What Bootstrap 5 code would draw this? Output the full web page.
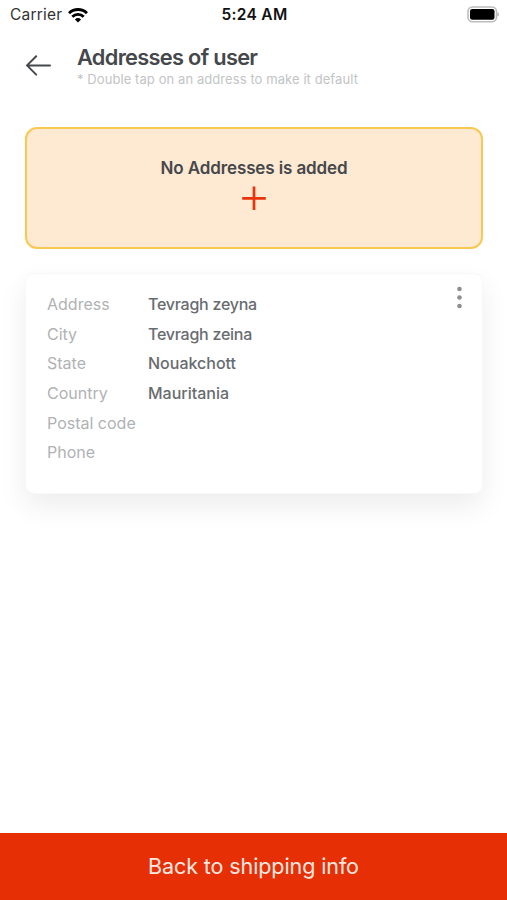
<!DOCTYPE html>
<html lang="en">
<head>
<meta charset="utf-8">
<meta name="viewport" content="width=device-width, initial-scale=1">
<title>Addresses of user</title>
<link href="https://cdn.jsdelivr.net/npm/bootstrap@5.3.0/dist/css/bootstrap.min.css" rel="stylesheet">
<style>
body { font-family: Inter, "Liberation Sans", sans-serif; color: #45484b; background: #fff; }
.screen { height: 900px; overflow: hidden; }
.status-bar { height: 30px; padding: 0 8px 0 10px; font-size: 16px; line-height: 30px; color: #111; }
.status-bar > div { flex: 1 1 0; }
.carrier { color: #333; font-size: 15.5px; letter-spacing: .2px; }
.wifi { margin-left: 6px; }
.clock { font-weight: 600; font-size: 15.5px; letter-spacing: .3px; }
.top-bar { height: 97px; padding: 14px 25px 0; }
.back-btn { width: 52px; padding: 9px 0 0; line-height: 0; border: 0; }
.page-title { font-size: 21.8px; font-weight: 600; line-height: 27px; letter-spacing: -.7px; }
.hint { font-size: 13px; line-height: 16px; color: #c2c4c6; letter-spacing: .08px; }
.content { padding: 0 24px 0 25px; }
.add-box { height: 122px; border: 2px solid #f8c951; border-radius: 12px; background: #fee9d2; padding-top: 26px; }
.add-label { font-size: 17px; font-weight: 600; line-height: 26px; letter-spacing: -.12px; }
.address-card { height: 221px; margin-top: 24px; border: 1px solid #f8f8f8; border-radius: 9px; box-shadow: 0 12px 28px rgba(0,0,0,.075); padding: 15px 20px 15px 21px; }
.field { height: 29.7px; line-height: 30px; }
.field dt { width: 101px; font-size: 16px; font-weight: 400; color: #b0b2b4; letter-spacing: 0; }
.field dd { font-size: 16px; font-weight: 500; color: #686c6f; letter-spacing: -.25px; }
.field .wide { letter-spacing: 0; }
.menu-btn { border: 0; line-height: 0; margin-top: -3px; }
.footer-btn { height: 67px; border-radius: 0; border: 0; background: #e72f06; color: #ffe9e2; font-size: 21.5px; letter-spacing: -.1px; }
.footer-btn:hover { background: #d42b05; color: #fff; }
</style>
</head>
<body>
<div class="screen d-flex flex-column">
  <div class="status-bar d-flex align-items-center">
    <div class="carrier d-flex align-items-center"><span>Carrier</span>
      <svg class="wifi" width="20" height="15" viewBox="0 0 20 15" fill="none" stroke="#000" stroke-width="2.9"><path d="M1 5.3a12.7 12.7 0 0 1 18 0M4.3 8.8a8 8 0 0 1 11.4 0"/><path d="M10 14.5l-3.1-3.1a4.4 4.4 0 0 1 6.2 0z" fill="#000" stroke="none"/></svg>
    </div>
    <div class="clock text-center">5:24 AM</div>
    <div class="d-flex justify-content-end">
      <svg width="32" height="18" viewBox="0 0 32 18"><rect x="1" y="1" width="28.5" height="14.8" rx="4.5" fill="#fff" stroke="#bcbcbc" stroke-width="1.6"/><rect x="3" y="3" width="24.5" height="10.8" rx="2.2"/><path d="M30.5 6.3v4.3q1.4-.6 1.4-2.15t-1.4-2.15" fill="#aaa"/></svg>
    </div>
  </div>
  <header class="top-bar d-flex align-items-start">
    <button class="back-btn btn text-start" aria-label="Back">
      <svg width="27" height="24" viewBox="0 0 27 24" fill="none" stroke="#46494c" stroke-width="2" stroke-linecap="round" stroke-linejoin="round"><path d="M25 12.4H2M11.2 3.2L2 12.4l9.2 9.2"/></svg>
    </button>
    <div>
      <h1 class="page-title mb-0">Addresses of user</h1>
      <p class="hint mb-0">* Double tap on an address to make it default</p>
    </div>
  </header>
  <main class="content flex-grow-1">
    <div class="add-box text-center">
      <div class="add-label">No Addresses is added</div>
      <svg class="d-block mx-auto mt-1" width="26" height="26" viewBox="0 0 26 26" stroke="#e8330c" stroke-width="2.7"><path d="M13 1.5v23.6M1.2 13.3h23.6"/></svg>
    </div>
    <section class="address-card d-flex justify-content-between align-items-start bg-white">
      <dl class="mb-0">
        <div class="field d-flex"><dt>Address</dt><dd class="mb-0">Tevragh zeyna</dd></div>
        <div class="field d-flex"><dt>City</dt><dd class="mb-0">Tevragh zeina</dd></div>
        <div class="field d-flex"><dt>State</dt><dd class="wide mb-0">Nouakchott</dd></div>
        <div class="field d-flex"><dt>Country</dt><dd class="wide mb-0">Mauritania</dd></div>
        <div class="field d-flex"><dt>Postal code</dt><dd class="mb-0"></dd></div>
        <div class="field d-flex"><dt>Phone</dt><dd class="mb-0"></dd></div>
      </dl>
      <button class="menu-btn btn p-0" aria-label="Options">
        <svg width="5" height="24" viewBox="0 0 5 24" fill="#8c8e90"><circle cx="2.5" cy="3" r="2.3"/><circle cx="2.5" cy="11.5" r="2.3"/><circle cx="2.5" cy="20" r="2.3"/></svg>
      </button>
    </section>
  </main>
  <button class="footer-btn btn w-100">Back to shipping info</button>
</div>
<script src="https://cdn.jsdelivr.net/npm/bootstrap@5.3.0/dist/js/bootstrap.bundle.min.js"></script>
</body>
</html>
